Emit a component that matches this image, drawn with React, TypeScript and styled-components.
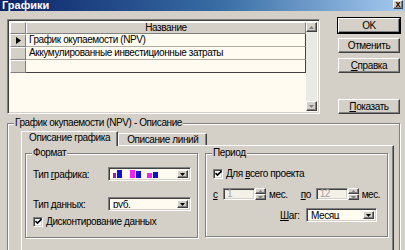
import styled, { createGlobalStyle } from "styled-components";

const GlobalStyle = createGlobalStyle`
  html, body {
    margin: 0;
    padding: 0;
  }
  body {
    width: 405px;
    height: 250px;
    overflow: hidden;
    background: #d4d0c8;
    font-family: "Liberation Sans", Arial, sans-serif;
    font-size: 10px;
    letter-spacing: -0.4px;
    color: #000;
  }
  * {
    box-sizing: border-box;
  }
`;

const rows = [
  { name: "График окупаемости (NPV)", current: true },
  { name: "Аккумулированные инвестиционные затраты", current: false },
  { name: "", current: false },
];

export default function App() {
  return (
    <>
      <GlobalStyle />
      <Window>
        <TitleBar>
          <span>Графики</span>
          <CloseButton>x</CloseButton>
        </TitleBar>

        <Body>
          <TopRow>
            <GridFrame>
              <Table>
                <GridRow>
                  <Indicator />
                  <HeaderCell>Название</HeaderCell>
                </GridRow>
                {rows.map((row, i) => (
                  <GridRow key={i}>
                    <Indicator>
                      {row.current && (
                        <svg width="5" height="7" viewBox="0 0 5 7">
                          <path d="M0 0 L5 3.5 L0 7 Z" fill="#000" />
                        </svg>
                      )}
                    </Indicator>
                    <Cell $last={i === rows.length - 1}>{row.name}</Cell>
                  </GridRow>
                ))}
              </Table>
              <ScrollBar>
                <ScrollButton>
                  <svg width="5" height="3" viewBox="0 0 5 3">
                    <path d="M0 3 L2.5 0 L5 3 Z" fill="#808080" />
                  </svg>
                </ScrollButton>
                <ScrollTrack />
                <ScrollButton>
                  <svg width="5" height="3" viewBox="0 0 5 3">
                    <path d="M0 0 L2.5 3 L5 0 Z" fill="#808080" />
                  </svg>
                </ScrollButton>
              </ScrollBar>
            </GridFrame>

            <ButtonColumn>
              <Button $default>OK</Button>
              <Button>Отменить</Button>
              <Button>
                <u>С</u>правка
              </Button>
              <Button $push>
                <u>П</u>оказать
              </Button>
            </ButtonColumn>
          </TopRow>

          <OuterGroup>
            <Legend $offset={-7}>График окупаемости (NPV) - Описание</Legend>
            <TabStrip>
              <Tab $active>Описание графика</Tab>
              <Tab>Описание линий</Tab>
            </TabStrip>
            <TabPanel>
              <Group $width={173} $height={91}>
                <Legend $offset={-1}>Формат</Legend>
                <FormRow $top={8}>
                  <Label $width={75}>
                    Тип <u>г</u>рафика:
                  </Label>
                  <Combo $width={83}>
                    <ComboValue>
                      <svg width="62" height="10" viewBox="0 0 62 10">
                        <rect x="0" y="4" width="3" height="5" fill="#a020a0" />
                        <rect x="4" y="0" width="5" height="9" fill="#1010d0" />
                        <rect x="17" y="0" width="5" height="9" fill="#f020f0" />
                        <rect x="23" y="2" width="5" height="7" fill="#1010d0" />
                        <rect x="34" y="4" width="5" height="5" fill="#f020f0" />
                        <rect x="40" y="3" width="5" height="6" fill="#1010d0" />
                        <rect x="0" y="9" width="62" height="1" fill="#303030" />
                      </svg>
                    </ComboValue>
                    <DropButton>
                      <svg width="5" height="3" viewBox="0 0 5 3">
                        <path d="M0 0 L2.5 3 L5 0 Z" fill="#000" />
                      </svg>
                    </DropButton>
                  </Combo>
                </FormRow>
                <FormRow $top={16}>
                  <Label $width={75}>
                    Тип <u>д</u>анных:
                  </Label>
                  <Combo $width={83}>
                    <ComboValue>руб.</ComboValue>
                    <DropButton>
                      <svg width="5" height="3" viewBox="0 0 5 3">
                        <path d="M0 0 L2.5 3 L5 0 Z" fill="#000" />
                      </svg>
                    </DropButton>
                  </Combo>
                </FormRow>
                <FormRow $top={5}>
                  <CheckBox />
                  <CheckLabel>
                    <u>Д</u>исконтирование данных
                  </CheckLabel>
                </FormRow>
              </Group>

              <Group $width={183} $height={90}>
                <Legend $offset={-1}>Период</Legend>
                <FormRow $top={9}>
                  <CheckBox />
                  <CheckLabel>
                    Для <u>в</u>сего проекта
                  </CheckLabel>
                </FormRow>
                <FormRow $top={9}>
                  <Label $width={10}>
                    <u>с</u>
                  </Label>
                  <SpinEdit value="1" />
                  <Unit>мес.</Unit>
                  <Label $width={15}>
                    <u>п</u>о
                  </Label>
                  <SpinEdit value="12" />
                  <Unit>мес.</Unit>
                </FormRow>
                <FormRow $top={8} $right>
                  <Label $width={26}>
                    <u>Ш</u>аг:
                  </Label>
                  <Combo $width={71}>
                    <ComboValue>Месяц</ComboValue>
                    <DropButton>
                      <svg width="5" height="3" viewBox="0 0 5 3">
                        <path d="M0 0 L2.5 3 L5 0 Z" fill="#000" />
                      </svg>
                    </DropButton>
                  </Combo>
                </FormRow>
              </Group>
            </TabPanel>
          </OuterGroup>
        </Body>
      </Window>
    </>
  );
}

function CheckBox() {
  return (
    <CheckFrame>
      <svg width="7" height="7" viewBox="0 0 7 7">
        <path d="M0.5 3 L2.5 5 L6.5 1" stroke="#000" strokeWidth="1.6" fill="none" />
      </svg>
    </CheckFrame>
  );
}

function SpinEdit({ value }: { value: string }) {
  return (
    <SpinWrap>
      <Edit>{value}</Edit>
      <Spin>
        <SpinHalf>
          <svg width="5" height="3" viewBox="0 0 5 3">
            <path d="M0 3 L2.5 0 L5 3 Z" fill="#808080" />
          </svg>
        </SpinHalf>
        <SpinHalf>
          <svg width="5" height="3" viewBox="0 0 5 3">
            <path d="M0 0 L2.5 3 L5 0 Z" fill="#808080" />
          </svg>
        </SpinHalf>
      </Spin>
    </SpinWrap>
  );
}

const raised = `
  border-top: 1px solid #fff;
  border-left: 1px solid #fff;
  border-right: 1px solid #404040;
  border-bottom: 1px solid #404040;
  box-shadow: inset -1px -1px 0 #808080;
`;

const sunken = `
  border-top: 1px solid #808080;
  border-left: 1px solid #808080;
  border-right: 1px solid #fff;
  border-bottom: 1px solid #fff;
  box-shadow: inset 1px 1px 0 #404040, inset -1px -1px 0 #d4d0c8;
`;

const Window = styled.div`
  width: 405px;
  height: 250px;
  display: flex;
  flex-direction: column;
  background: #d4d0c8;
  overflow: hidden;
`;

const TitleBar = styled.div`
  flex: none;
  height: 11px;
  display: flex;
  align-items: center;
  justify-content: space-between;
  padding: 0 2px 0 2px;
  background: linear-gradient(to right, #0a246a, #3a6ea5 55%, #a6caf0);
  color: #fff;
  font-size: 11px;
  font-weight: bold;
  letter-spacing: 0;
  line-height: 11px;
`;

const CloseButton = styled.div`
  width: 10px;
  height: 9px;
  margin-top: -2px;
  background: #d4d0c8;
  color: #000;
  font-size: 9px;
  line-height: 7px;
  text-align: center;
  ${raised}
`;

const Body = styled.div`
  display: flex;
  flex-direction: column;
  padding: 7px 5px 0 7px;
`;

const TopRow = styled.div`
  display: flex;
  align-items: flex-start;
  height: 96px;
`;

const GridFrame = styled.div`
  display: flex;
  width: 313px;
  height: 95px;
  margin-top: 1px;
  background: #fffbf0;
  ${sunken}
  padding: 2px;
`;

const Table = styled.div`
  flex: 1;
  display: flex;
  flex-direction: column;
`;

const GridRow = styled.div`
  display: flex;
  height: 13px;
  &:first-child {
    height: 12px;
  }
`;

const Indicator = styled.div`
  width: 16px;
  flex: none;
  display: flex;
  align-items: center;
  justify-content: center;
  background: #d4d0c8;
  border-top: 1px solid #fff;
  border-left: 1px solid #fff;
  border-right: 1px solid #808080;
  border-bottom: 1px solid #808080;
`;

const HeaderCell = styled.div`
  flex: 1;
  background: #d4d0c8;
  text-align: center;
  line-height: 10px;
  border-top: 1px solid #fff;
  border-left: 1px solid #fff;
  border-right: 1px solid #808080;
  border-bottom: 1px solid #808080;
`;

const Cell = styled.div<{ $last?: boolean }>`
  flex: 1;
  padding-left: 3px;
  line-height: 12px;
  white-space: nowrap;
  border-right: 1px solid #404040;
  border-bottom: 1px solid ${(p) => (p.$last ? "#404040" : "#b0aca4")};
`;

const ScrollBar = styled.div`
  width: 11px;
  flex: none;
  display: flex;
  flex-direction: column;
  background: #ebe9e4;
`;

const ScrollButton = styled.div`
  height: 10px;
  display: flex;
  align-items: center;
  justify-content: center;
  background: #d4d0c8;
  ${raised}
`;

const ScrollTrack = styled.div`
  flex: 1;
`;

const ButtonColumn = styled.div`
  display: flex;
  flex-direction: column;
  gap: 5px;
  width: 62px;
  height: 96px;
  margin-left: 18px;
`;

const Button = styled.div<{ $default?: boolean; $push?: boolean }>`
  height: 15px;
  display: flex;
  align-items: center;
  justify-content: center;
  background: #d4d0c8;
  ${raised}
  ${(p) =>
    p.$default &&
    `
    outline: 1px solid #000;
    outline-offset: 0;
    border-right-color: #000;
    border-bottom-color: #000;
  `}
  ${(p) => p.$push && "margin-top: auto;"}
`;

const OuterGroup = styled.fieldset`
  margin: 3px 0 0 0;
  padding: 2px 5px 0 13px;
  min-width: 0;
  height: 140px;
  border: 1px solid #808080;
  box-shadow: inset 1px 1px 0 #fff, 1px 1px 0 #fff;
`;

const Legend = styled.legend<{ $offset: number }>`
  margin-left: ${(p) => p.$offset}px;
  padding: 0 1px;
  line-height: 12px;
  background: #d4d0c8;
`;

const TabStrip = styled.div`
  display: flex;
  align-items: flex-end;
  position: relative;
  z-index: 1;
`;

const Tab = styled.div<{ $active?: boolean }>`
  height: ${(p) => (p.$active ? 15 : 12)}px;
  padding: 0 ${(p) => (p.$active ? 7 : 8)}px;
  line-height: ${(p) => (p.$active ? 12 : 11)}px;
  background: #d4d0c8;
  border-top: 1px solid #fff;
  border-left: 1px solid #fff;
  border-right: 1px solid #404040;
  margin-bottom: ${(p) => (p.$active ? -1 : 0)}px;
  box-shadow: inset -1px 0 0 #808080;
`;

const TabPanel = styled.div`
  display: flex;
  gap: 7px;
  height: 120px;
  padding: 1px 4px 0 3px;
  border-top: 1px solid #fff;
  border-left: 1px solid #fff;
  border-right: 1px solid #404040;
  box-shadow: inset -1px 0 0 #808080;
`;

const Group = styled.fieldset<{ $width: number; $height: number }>`
  width: ${(p) => p.$width}px;
  height: ${(p) => p.$height}px;
  margin: 0;
  padding: 0 6px 0 7px;
  min-width: 0;
  border: 1px solid #808080;
  box-shadow: inset 1px 1px 0 #fff, 1px 1px 0 #fff;
`;

const FormRow = styled.div<{ $top: number; $right?: boolean }>`
  display: flex;
  align-items: center;
  margin-top: ${(p) => p.$top}px;
  justify-content: ${(p) => (p.$right ? "flex-end" : "flex-start")};
  padding-right: ${(p) => (p.$right ? 4 : 0)}px;
`;

const Label = styled.span<{ $width: number }>`
  width: ${(p) => p.$width}px;
  flex: none;
  white-space: nowrap;
`;

const Combo = styled.div<{ $width: number }>`
  width: ${(p) => p.$width}px;
  height: 14px;
  display: flex;
  background: #fffbf0;
  ${sunken}
  padding: 2px;
`;

const ComboValue = styled.div`
  flex: 1;
  display: flex;
  align-items: center;
  padding-left: 2px;
  overflow: hidden;
`;

const DropButton = styled.div`
  width: 11px;
  display: flex;
  align-items: center;
  justify-content: center;
  background: #d4d0c8;
  ${raised}
`;

const CheckFrame = styled.div`
  width: 10px;
  height: 10px;
  margin-right: 3px;
  display: flex;
  align-items: center;
  justify-content: center;
  background: #fff;
  ${sunken}
`;

const CheckLabel = styled.span`
  white-space: nowrap;
`;

const SpinWrap = styled.div`
  display: flex;
  height: 12px;
`;

const Edit = styled.div`
  width: 32px;
  padding-left: 3px;
  line-height: 10px;
  color: #a0a0a0;
  background: #f4f1e8;
  ${sunken}
`;

const Spin = styled.div`
  width: 11px;
  display: flex;
  flex-direction: column;
`;

const SpinHalf = styled.div`
  flex: 1;
  display: flex;
  align-items: center;
  justify-content: center;
  background: #d4d0c8;
  ${raised}
`;

const Unit = styled.span`
  margin: 0 13px 0 3px;
  white-space: nowrap;
`;
